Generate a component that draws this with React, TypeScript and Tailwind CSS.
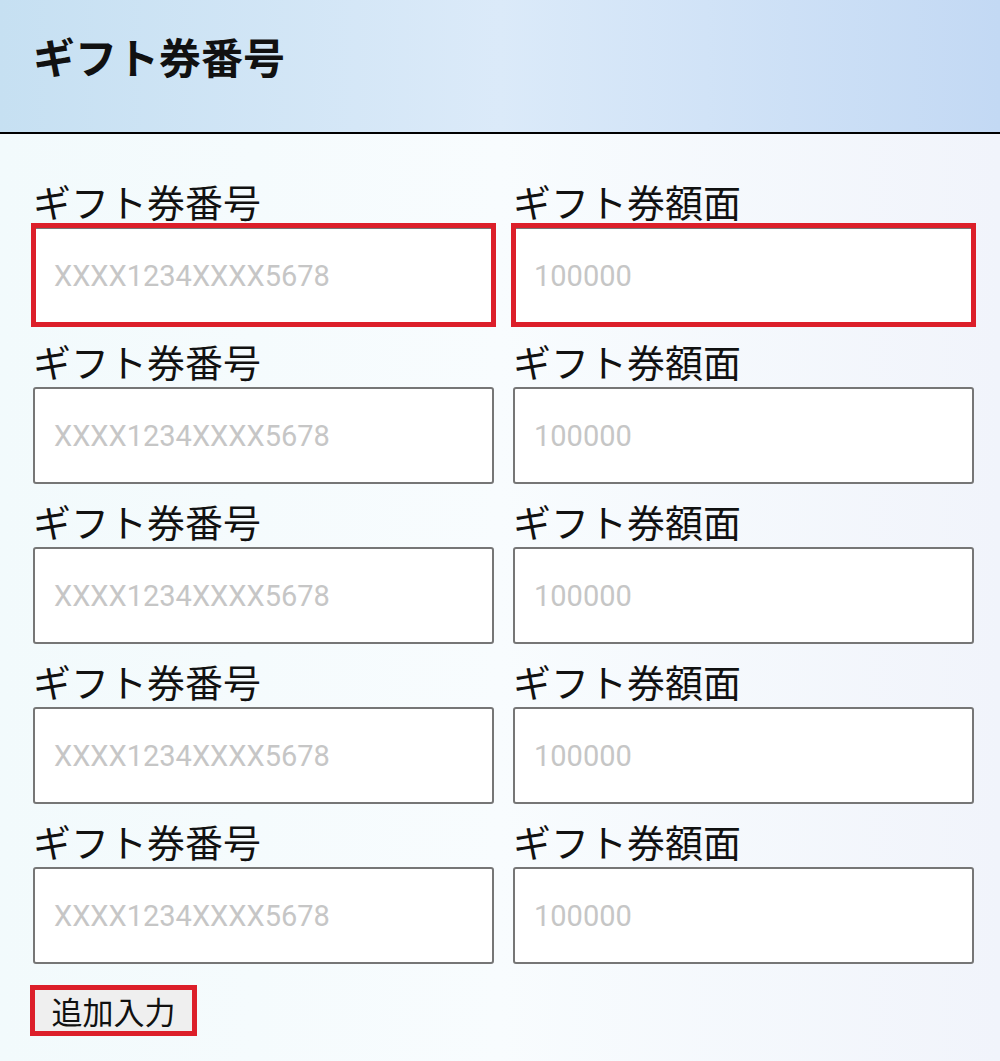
const rows = [0, 1, 2, 3, 4];

const Field = ({
  label,
  placeholder,
  marked,
}: {
  label: string;
  placeholder: string;
  marked?: boolean;
}) => {
  return (
    <div className="flex flex-col">
      <label className="h-[40px] mb-1.5 text-[38px] leading-[40px] text-[#111] font-['Noto_Sans_CJK_JP',sans-serif] whitespace-nowrap">
        {label}
      </label>
      <div className="relative">
        <input
          type="text"
          placeholder={placeholder}
          className="block h-[97px] w-full bg-white border-2 border-[#767676] rounded-[3px] pl-[19px] text-[29px] font-['Roboto',sans-serif] text-[#222] placeholder:text-[#c6c6c6] outline-none"
        />
        {marked && (
          <span className="pointer-events-none absolute -top-[4px] -bottom-[3px] -left-[2px] -right-[2px] border-[5px] border-[#dc1f2a]" />
        )}
      </div>
    </div>
  );
};

export default function App() {
  return (
    <div className="w-[1000px] h-[1061px] overflow-hidden bg-gradient-to-r from-[#f2fafc] via-[#f8fcfe] to-[#f1f4fb]">
      <header className="h-[134px] flex items-center pl-[33px] pb-[20px] border-b-2 border-black bg-gradient-to-r from-[#c6e0f2] via-[#dbeaf9] to-[#c3d9f4]">
        <h1 className="text-[42px] font-bold leading-none text-[#111] font-['Noto_Sans_CJK_JP',sans-serif]">
          ギフト券番号
        </h1>
      </header>

      <main className="pl-[33px] pr-[26px] pt-[47px]">
        <div className="grid grid-cols-2 gap-x-[19px] gap-y-[17px]">
          {rows.map((i) => (
            <>
              <Field
                key={`no-${i}`}
                label="ギフト券番号"
                placeholder="XXXX1234XXXX5678"
                marked={i === 0}
              />
              <Field
                key={`amt-${i}`}
                label="ギフト券額面"
                placeholder="100000"
                marked={i === 0}
              />
            </>
          ))}
        </div>

        <button
          type="button"
          className="mt-[21px] -ml-[3px] w-[167px] h-[51px] flex items-center justify-center bg-[#efefef] border-[5px] border-[#dc1f2a] text-[31px] leading-none text-[#111] font-['Noto_Sans_CJK_JP',sans-serif]"
        >
          追加入力
        </button>
      </main>
    </div>
  );
}
